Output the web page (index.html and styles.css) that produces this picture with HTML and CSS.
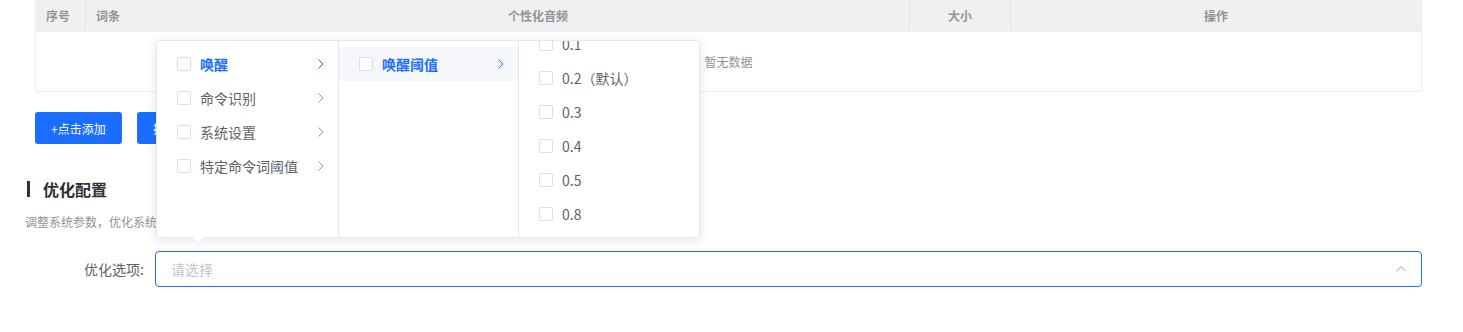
FILE: index.html
```html
<!DOCTYPE html>
<html lang="zh-CN">

<head>
  <meta charset="UTF-8">
  <meta name="viewport" content="width=device-width, initial-scale=1.0">
  <title>优化配置</title>
  <link rel="stylesheet" href="styles.css">
</head>

<body>
  <div class="page">
    <div class="table">
      <div class="table__head">
        <div class="table__th">序号</div>
        <div class="table__th table__th--nodiv">词条</div>
        <div class="table__th">个性化音频</div>
        <div class="table__th table__th--center">大小</div>
        <div class="table__th table__th--center table__th--last">操作</div>
      </div>
      <div class="table__empty">暂无数据</div>
    </div>

    <div class="actions">
      <button class="btn">+点击添加</button>
      <button class="btn">批量导入</button>
    </div>

    <h2 class="section-title">优化配置</h2>
    <p class="section-desc">调整系统参数，优化系统表现</p>

    <div class="form-row">
      <label class="form-row__label">优化选项:</label>
      <div class="select">
        <span class="select__placeholder">请选择</span>
        <svg class="select__arrow" width="12" height="12" viewBox="0 0 12 12">
          <path d="M1.5 8 L6 3.8 L10.5 8" fill="none" stroke="#c0c4cc" stroke-width="1.2"/>
        </svg>

        <!-- cascader popup -->
        <div class="cascader">
          <div class="cascader__menu cascader__menu--first">
            <ul class="cascader__list">
              <li class="cascader__item cascader__item--active"><span class="checkbox"></span>唤醒<svg class="cascader__arrow" width="14" height="14" viewBox="0 0 14 14"><path d="M4.5 2.5 L9 7 L4.5 11.5" fill="none" stroke="currentColor" stroke-width="1"/></svg></li>
              <li class="cascader__item"><span class="checkbox"></span>命令识别<svg class="cascader__arrow" width="14" height="14" viewBox="0 0 14 14"><path d="M4.5 2.5 L9 7 L4.5 11.5" fill="none" stroke="currentColor" stroke-width="1"/></svg></li>
              <li class="cascader__item"><span class="checkbox"></span>系统设置<svg class="cascader__arrow" width="14" height="14" viewBox="0 0 14 14"><path d="M4.5 2.5 L9 7 L4.5 11.5" fill="none" stroke="currentColor" stroke-width="1"/></svg></li>
              <li class="cascader__item"><span class="checkbox"></span>特定命令词阈值<svg class="cascader__arrow" width="14" height="14" viewBox="0 0 14 14"><path d="M4.5 2.5 L9 7 L4.5 11.5" fill="none" stroke="currentColor" stroke-width="1"/></svg></li>
            </ul>
          </div>
          <div class="cascader__menu">
            <ul class="cascader__list">
              <li class="cascader__item cascader__item--active cascader__item--hover"><span class="checkbox"></span>唤醒阈值<svg class="cascader__arrow" width="14" height="14" viewBox="0 0 14 14"><path d="M4.5 2.5 L9 7 L4.5 11.5" fill="none" stroke="currentColor" stroke-width="1"/></svg></li>
            </ul>
          </div>
          <div class="cascader__menu cascader__menu--last">
            <ul class="cascader__list cascader__list--scrolled">
              <li class="cascader__item"><span class="checkbox"></span>0.1</li>
              <li class="cascader__item"><span class="checkbox"></span>0.2（默认）</li>
              <li class="cascader__item"><span class="checkbox"></span>0.3</li>
              <li class="cascader__item"><span class="checkbox"></span>0.4</li>
              <li class="cascader__item"><span class="checkbox"></span>0.5</li>
              <li class="cascader__item"><span class="checkbox"></span>0.8</li>
            </ul>
          </div>
          <div class="cascader__tip"></div>
        </div>
      </div>
    </div>
  </div>
</body>

</html>
```

FILE: styles.css
```css
* {
  margin: 0;
  padding: 0;
  box-sizing: border-box;
}

body {
  font-family: 'Noto Sans CJK SC', 'Microsoft YaHei', sans-serif;
  color: #606266;
  background-color: #fff;
}

li {
  list-style-type: none;
}

.page {
  padding: 0 41px 0 25px;
}

/* TABLE */
.table {
  margin-left: 10px;
  border: 1px solid #ebeef5;
  border-top: none;
}

.table__head {
  display: grid;
  grid-template-columns: 50px 412px 412px 101px 1fr;
  height: 32px;
  background-color: #f0f0f0;
  border-bottom: 1px solid #ebeef5;
}

.table__th {
  display: flex;
  align-items: center;
  padding-left: 10px;
  font-size: 12px;
  font-weight: 700;
  color: #909399;
  border-right: 1px solid #e6e6e6;
}

.table__th--nodiv {
  border-right: none;
}

.table__th--center {
  justify-content: center;
  padding-left: 0;
}

.table__th--last {
  border-right: none;
}

.table__empty {
  height: 59px;
  display: flex;
  align-items: center;
  justify-content: center;
  font-size: 12px;
  color: #909399;
}

/* BUTTONS */
.actions {
  display: flex;
  gap: 15px;
  margin: 20px 0 0 10px;
}

.btn {
  height: 32px;
  padding: 0 16px;
  border: none;
  border-radius: 3px;
  background-color: #1a6dff;
  color: #fff;
  font-family: inherit;
  font-size: 12px;
}

/* SECTION */
.section-title {
  display: flex;
  align-items: center;
  margin: 36px 0 0 2px;
  height: 18px;
  font-size: 16px;
  font-weight: 700;
  color: #303133;
}

.section-title::before {
  content: '';
  width: 3px;
  height: 16px;
  margin-right: 13px;
  background-color: #303133;
}

.section-desc {
  margin-top: 15px;
  font-size: 12px;
  line-height: 18px;
  color: #909399;
}

/* FORM */
.form-row {
  display: flex;
  align-items: center;
  margin-top: 20px;
}

.form-row__label {
  width: 130px;
  padding-right: 11px;
  text-align: right;
  font-size: 14px;
  color: #606266;
}

.select {
  position: relative;
  flex: 1;
  height: 36px;
  display: flex;
  align-items: center;
  padding: 0 15px;
  border: 1px solid #1a6dff;
  border-radius: 4px;
}

.select__placeholder {
  flex: 1;
  font-size: 14px;
  color: #c0c4cc;
}

.select__arrow {
  margin-right: -1px;
}

/* CASCADER */
.cascader {
  position: absolute;
  left: 0;
  bottom: calc(100% + 14px);
  display: flex;
  height: 198px;
  background-color: #fff;
  border: 1px solid #e4e7ed;
  border-radius: 4px;
  box-shadow: 0 2px 12px rgba(0, 0, 0, 0.1);
  z-index: 10;
}

.cascader__menu {
  width: 180px;
  overflow: hidden;
  border-right: 1px solid #e4e7ed;
}

.cascader__menu--first {
  width: 182px;
}

.cascader__menu--last {
  width: 180px;
  border-right: none;
}

.cascader__list {
  padding: 6px 0;
}

.cascader__list--scrolled {
  margin-top: -20px;
}

.cascader__item {
  position: relative;
  display: flex;
  align-items: center;
  height: 34px;
  padding: 0 30px 0 20px;
  font-size: 14px;
  color: #606266;
  white-space: nowrap;
}

.cascader__item--active {
  color: #1a6dff;
  font-weight: 700;
}

.cascader__item--hover {
  background-color: #f5f7fa;
}

.cascader__arrow {
  position: absolute;
  right: 10px;
  top: 10px;
  color: #909399;
}

.cascader__item--active .cascader__arrow {
  color: #1a6dff;
}

.checkbox {
  width: 14px;
  height: 14px;
  margin-right: 9px;
  border: 1px solid #dcdfe6;
  border-radius: 2px;
  background-color: #fff;
}

.cascader__tip {
  position: absolute;
  left: 35px;
  bottom: -6px;
  width: 0;
  height: 0;
  border-left: 6px solid transparent;
  border-right: 6px solid transparent;
  border-top: 6px solid #fff;
  filter: drop-shadow(0 1px 0 #ebeef5);
}
```
